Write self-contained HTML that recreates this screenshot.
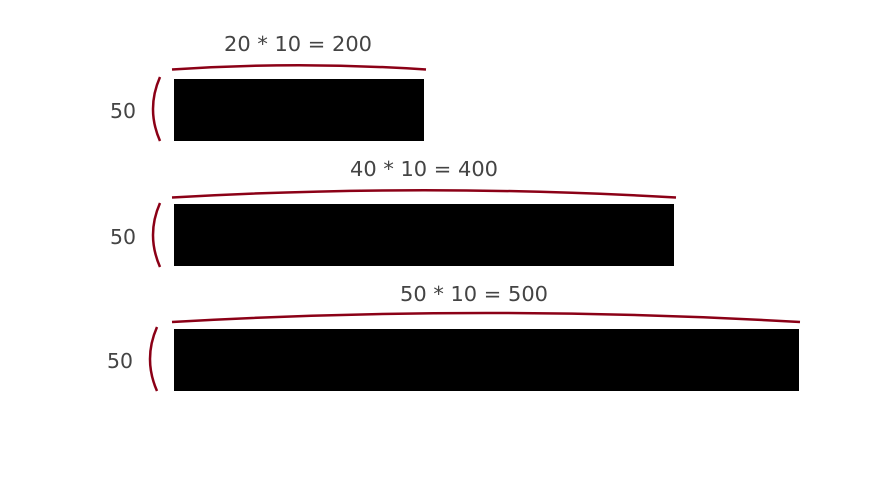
<!DOCTYPE html>
<html><head><style>html,body{margin:0;padding:0;background:#fff;}svg{display:block}</style></head>
<body>
<svg width="880" height="495" viewBox="0 0 880 495" xmlns="http://www.w3.org/2000/svg">
<g fill="#000">
<rect x="174" y="79" width="250" height="62"/>
<rect x="174" y="204" width="500" height="62"/>
<rect x="174" y="329" width="625" height="62"/>
</g>
<g fill="none" stroke="#8b0016" stroke-width="2.5">
<path d="M172 69.5 Q299 61 426 69.5"/>
<path d="M172 197.5 Q424 183 676 197.5"/>
<path d="M172 322 Q486 304 800 322"/>
<path d="M160 77 Q146 109 160 141"/>
<path d="M160 203 Q146 235 160 267"/>
<path d="M157 327 Q143 359 157 391"/>
</g>
<g font-family="DejaVu Sans, sans-serif" font-size="20" fill="#444">
<text x="224" y="51" textLength="148" lengthAdjust="spacingAndGlyphs">20 * 10 = 200</text>
<text x="350" y="176" textLength="148" lengthAdjust="spacingAndGlyphs">40 * 10 = 400</text>
<text x="400" y="301" textLength="148" lengthAdjust="spacingAndGlyphs">50 * 10 = 500</text>
<text x="110" y="118" textLength="26" lengthAdjust="spacingAndGlyphs">50</text>
<text x="110" y="244" textLength="26" lengthAdjust="spacingAndGlyphs">50</text>
<text x="107" y="368" textLength="26" lengthAdjust="spacingAndGlyphs">50</text>
</g>
</svg>
</body></html>
